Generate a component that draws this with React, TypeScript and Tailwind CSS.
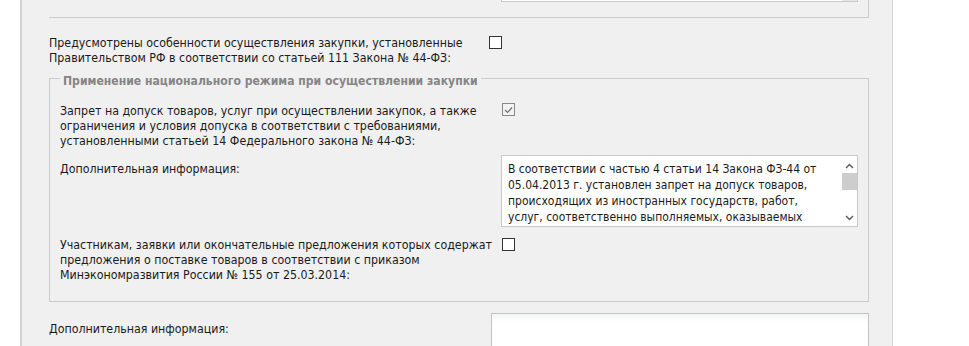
import React from "react"

function Checkbox({ checked }: { checked?: boolean }) {
  if (checked) {
    return (
      <span className="flex h-[13px] w-[13px] shrink-0 items-center justify-center border border-[#888888] bg-[#f2f2f2]">
        <svg width="9" height="8" viewBox="0 0 9 8">
          <path d="M1 4 L3.5 6.5 L8 1.5" stroke="#6e6e6e" strokeWidth="1.2" fill="none" />
        </svg>
      </span>
    )
  }
  return <span className="block h-[13px] w-[13px] shrink-0 border border-[#333333] bg-white" />
}

function Scrollbar() {
  return (
    <div className="flex w-[15px] shrink-0 flex-col items-center bg-white">
      <svg className="mt-[7px]" width="9" height="6" viewBox="0 0 9 6">
        <path d="M1 5 L4.5 1.5 L8 5" stroke="#606060" strokeWidth="1.5" fill="none" />
      </svg>
      <div className="mt-[4px] h-[17px] w-[15px] bg-[#cdcdcd]" />
      <div className="flex-1" />
      <svg className="mb-[5px]" width="9" height="6" viewBox="0 0 9 6">
        <path d="M1 1 L4.5 4.5 L8 1" stroke="#606060" strokeWidth="1.5" fill="none" />
      </svg>
    </div>
  )
}

export default function App() {
  const text =
    "font-['DejaVu_Sans_Condensed','Liberation_Sans',Arial,sans-serif] text-[12.3px] leading-[15px] text-[#1a1a1a]"
  // текст меток чуть ниже, без влияния на высоту строки
  const label = "whitespace-nowrap pt-[2px] -mb-[2px]"

  return (
    <div className={`flex h-[346px] w-[969px] overflow-hidden bg-white ${text}`}>
      <div className="ml-[20px] h-full w-[873px] border-l-2 border-r border-[#d3d3d3] bg-[#f0f0f0] pl-[27px]">
        {/* верхний блок, обрезан сверху */}
        <div className="flex h-[18px] w-[820px] items-start border-r border-b border-[#cccccc] pl-[452px]">
          <div className="flex h-[2px] w-[357px] border-x border-b border-[#c8c8c8] bg-white">
            <div className="flex-1" />
            <div className="w-[15px] bg-[#e6e6e6]" />
          </div>
        </div>

        <div className="mt-[16px] flex w-[820px]">
          <div className={`w-[440px] ${label}`}>
            Предусмотрены особенности осуществления закупки, установленные
            <br />
            Правительством РФ в соответствии со статьей 111 Закона № 44-ФЗ:
          </div>
          <div className="mt-[2px]">
            <Checkbox />
          </div>
        </div>

        {/* Применение национального режима */}
        <div className="relative mt-[14px] w-[820px] border border-[#cccccc] pl-[10px] pb-[20px]">
          <div className="absolute left-[10px] top-[-5px] bg-[#f0f0f0] px-[3px] text-[12.1px] font-bold text-[#858585]">
            Применение национального режима при осуществлении закупки
          </div>

          <div className="mt-[23px] flex">
            <div className={`w-[442px] ${label}`}>
              Запрет на допуск товаров, услуг при осуществлении закупок, а также
              <br />
              ограничения и условия допуска в соответствии с требованиями,
              <br />
              установленными статьей 14 Федерального закона № 44-ФЗ:
            </div>
            <div className="mt-[1px]">
              <Checkbox checked />
            </div>
          </div>

          <div className="mt-[8px] flex">
            <div className={`mt-[5px] w-[441px] ${label}`}>Дополнительная информация:</div>
            <div className="flex h-[72px] w-[357px] border border-[#c8c8c8] bg-white">
              <div className="h-full flex-1 overflow-hidden pl-[6px] pt-[5px] text-[12px] leading-[16px] whitespace-nowrap">
                В соответствии с частью 4 статьи 14 Закона ФЗ-44 от
                <br />
                05.04.2013 г. установлен запрет на допуск товаров,
                <br />
                происходящих из иностранных государств, работ,
                <br />
                услуг, соответственно выполняемых, оказываемых
              </div>
              <Scrollbar />
            </div>
          </div>

          <div className="mt-[9px] flex">
            <div className={`w-[442px] ${label}`}>
              Участникам, заявки или окончательные предложения которых содержат
              <br />
              предложения о поставке товаров в соответствии с приказом
              <br />
              Минэкономразвития России № 155 от 25.03.2014:
            </div>
            <div className="mt-[2px]">
              <Checkbox />
            </div>
          </div>
        </div>

        <div className="mt-[11px] flex w-[820px]">
          <div className={`mt-[7px] w-[442px] ${label}`}>Дополнительная информация:</div>
          <div className="h-[60px] w-[378px] border border-[#c3c3c3] bg-white shadow-[inset_0_6px_6px_-3px_rgba(120,140,140,0.12)]" />
        </div>
      </div>
    </div>
  )
}
